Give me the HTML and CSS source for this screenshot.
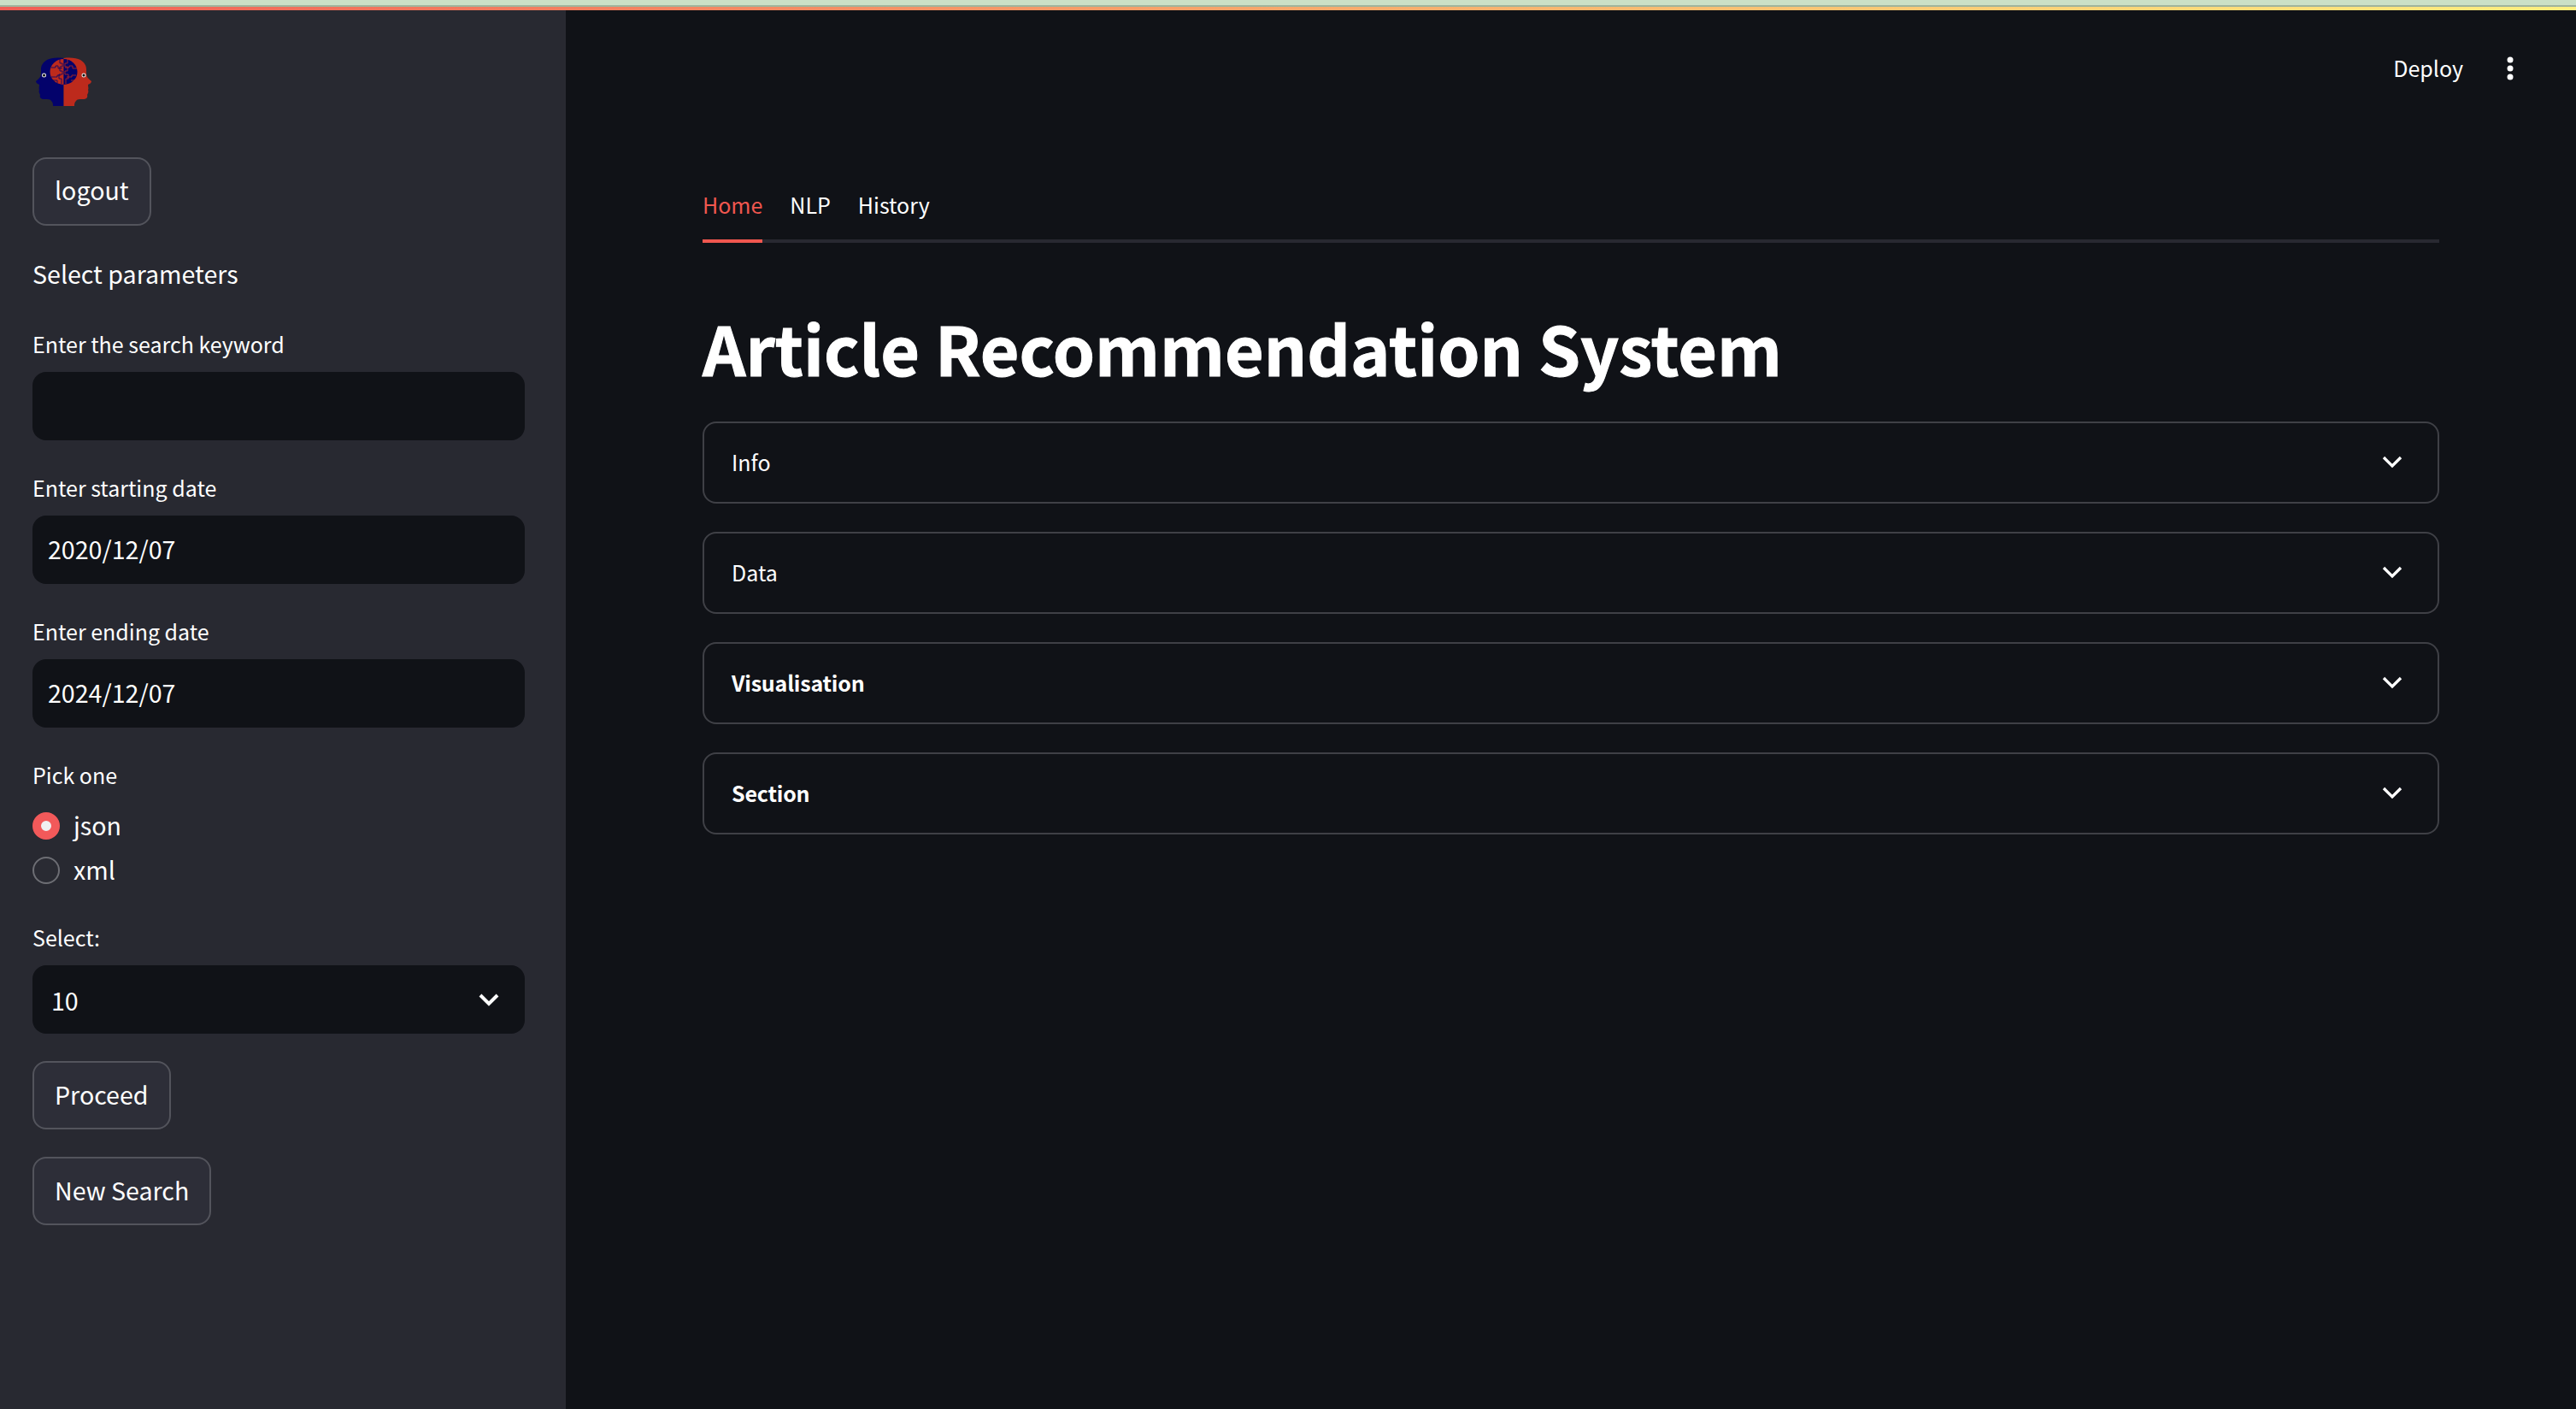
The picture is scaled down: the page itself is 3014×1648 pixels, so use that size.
FILE: index.html
```html
<!DOCTYPE html>
<html lang="en">
<head>
    <meta charset="UTF-8">
    <title>Article Recommendation System</title>
    <link rel="stylesheet" href="styles.css">
</head>
<body>
    <div class="browser-edge"></div>
    <div class="decoration"></div>
    <div class="app">
        <aside class="sidebar">
            <svg class="logo" viewBox="0 0 65 58" width="65" height="58">
                <path fill="#03026b" d="M32.500 1 C24 0 17 1 13 3 C8 6 6 10 6 14 C6 19 6 21 5 23 C4 25 2 26 0 28 C0 30 2 31 4 32 C4 35 3 37 4 38 C3 40 4 42 5 44 C4 47 6 49 10 49 C14 49 17 49 18 51 C20 53 20 55 20 57 L32.500 57 Z"/>
                <path fill="#bd2a1c" transform="translate(65) scale(-1,1)" d="M32.500 1 C24 0 17 1 13 3 C8 6 6 10 6 14 C6 19 6 21 5 23 C4 25 2 26 0 28 C0 30 2 31 4 32 C4 35 3 37 4 38 C3 40 4 42 5 44 C4 47 6 49 10 49 C14 49 17 49 18 51 C20 53 20 55 20 57 L32.500 57 Z"/>
                <path fill="#bd2a1c" d="M32.500 2 A16 15 0 0 0 32.500 32 Z"/>
                <path fill="#03026b" d="M32.500 2 A16 15 0 0 1 32.500 32 Z"/>
                <path fill="none" stroke="#03026b" stroke-width=".8" d="M18 12 h5 v-2 h3 v3 h5 M28 2 v5 h3 v4 h-3 v5 h3 v4 h-4 v5 h3 v6 M18 23 h7 v-2 h4 M20 27 h5 v3"/>
                <path fill="none" stroke="#bd2a1c" stroke-width=".8" d="M34 12 h5 v-2 h4 v3 h5 M37 2 v5 h-3 v4 h3 v5 h-3 v4 h4 v5 h-3 v6 M36 23 h6 v-2 h5 M41 27 h4 v3"/>
                <circle cx="9.500" cy="21" r="2.500" fill="#e8e8e8"/>
                <circle cx="9.500" cy="21" r="1.500" fill="#111"/>
                <circle cx="56" cy="21" r="2.500" fill="#e8e8e8"/>
                <circle cx="56" cy="21" r="1.500" fill="#111"/>
            </svg>
            <button class="btn btn-logout">logout</button>
            <div class="side-title">Select parameters</div>

            <label class="field-label label-first">Enter the search keyword</label>
            <input class="field" type="text" value="">
            <label class="field-label">Enter starting date</label>
            <input class="field" type="text" value="2020/12/07">
            <label class="field-label">Enter ending date</label>
            <input class="field" type="text" value="2024/12/07">

            <div class="field-label">Pick one</div>
            <div class="radios">
                <div class="radio-row"><span class="radio radio-on"></span>json</div>
                <div class="radio-row"><span class="radio"></span>xml</div>
            </div>

            <div class="field-label label-select">Select:</div>
            <div class="field select">
                <span>10</span>
                <svg width="40" height="40" viewBox="0 0 24 24"><path fill="none" stroke="#fff" stroke-width="2.400" d="M6 9 l6 6 6-6"/></svg>
            </div>

            <button class="btn btn-proceed">Proceed</button>
            <button class="btn btn-new">New Search</button>
        </aside>

        <main class="main">
            <header class="header">
                <span class="deploy">Deploy</span>
                <svg class="kebab" width="10" height="30" viewBox="0 0 10 30">
                    <circle cx="5" cy="5" r="3.500" fill="#fff"/>
                    <circle cx="5" cy="15" r="3.500" fill="#fff"/>
                    <circle cx="5" cy="25" r="3.500" fill="#fff"/>
                </svg>
            </header>
            <div class="content">
                <ul class="tabs">
                    <li class="selected">Home</li>
                    <li>NLP</li>
                    <li>History</li>
                </ul>
                <h1 class="title">Article Recommendation System</h1>
                <div class="expander">
                    <span>Info</span>
                    <svg width="40" height="40" viewBox="0 0 24 24"><path fill="none" stroke="#fff" stroke-width="2" d="M6 9 l6 6 6-6"/></svg>
                </div>
                <div class="expander">
                    <span>Data</span>
                    <svg width="40" height="40" viewBox="0 0 24 24"><path fill="none" stroke="#fff" stroke-width="2" d="M6 9 l6 6 6-6"/></svg>
                </div>
                <div class="expander">
                    <b>Visualisation</b>
                    <svg width="40" height="40" viewBox="0 0 24 24"><path fill="none" stroke="#fff" stroke-width="2" d="M6 9 l6 6 6-6"/></svg>
                </div>
                <div class="expander">
                    <b>Section</b>
                    <svg width="40" height="40" viewBox="0 0 24 24"><path fill="none" stroke="#fff" stroke-width="2" d="M6 9 l6 6 6-6"/></svg>
                </div>
            </div>
        </main>
    </div>
</body>
</html>
```

FILE: styles.css
```css
*{
    margin: 0;
    padding: 0;
    box-sizing: border-box;
}
html,body{
    height: 100%;
}
body{
    display: flex;
    flex-direction: column;
    background: #101217;
    color: #fff;
    font-family: "Noto Sans CJK SC", "Open Sans", sans-serif;
    font-size: 25px;
    overflow: hidden;
}
li{
    list-style: none;
}
.browser-edge{
    height: 8px;
    background: #cbe0c6;
    border-bottom: 2px solid #a0b49c;
}
.decoration{
    height: 4px;
    background: linear-gradient(90deg, #f05f55, #fff080);
}
.app{
    flex: 1;
    display: flex;
}

/* sidebar */
.sidebar{
    width: 662px;
    padding: 55px 48px 0 38px;
    background: #282931;
    display: flex;
    flex-direction: column;
    align-items: flex-start;
}
.logo{
    display: block;
    margin: 0 0 59px 4px;
}
.btn{
    height: 80px;
    padding: 0 24px 4px;
    border: 2px solid #53545c;
    border-radius: 16px;
    background: #2d2e38;
    color: #fff;
    font: inherit;
    font-size: 28.600px;
}
.btn-logout{
    padding-bottom: 6px;
}
.side-title{
    margin-top: 36px;
    margin-bottom: 2px;
    font-size: 28.600px;
    line-height: 40px;
}
.field-label{
    margin-top: 37px;
    margin-bottom: 2px;
    line-height: 36px;
}
.label-first{
    margin-top: 42px;
}
.field{
    width: 100%;
    height: 80px;
    margin-top: 13px;
    padding: 0 18px 4px;
    border: 0;
    border-radius: 16px;
    background: #101217;
    color: #fff;
    font: inherit;
    font-size: 28.600px;
}
.radios{
    margin-top: 12px;
}
.radio-row{
    display: flex;
    align-items: center;
    gap: 16px;
    height: 52px;
    font-size: 28.600px;
}
.radio{
    width: 32px;
    height: 32px;
    margin-top: 3px;
    border: 2px solid #6d6e74;
    border-radius: 50%;
    background: #2a2b33;
}
.radio-on{
    border: 10px solid #f2595a;
    background: #f0f0f2;
}
.label-select{
    margin-top: 36px;
}
.select{
    display: flex;
    align-items: center;
    justify-content: space-between;
    padding: 0 22px;
}
.btn-proceed{
    margin-top: 32px;
}
.btn-new{
    margin-top: 32px;
}

/* main */
.main{
    flex: 1;
    display: flex;
    flex-direction: column;
}
.header{
    height: 136px;
    padding-right: 72px;
    display: flex;
    align-items: center;
    justify-content: flex-end;
    gap: 50px;
}
.deploy{
    padding-bottom: 2px;
}
.content{
    padding: 52px 160px 0;
}
.tabs{
    display: flex;
    gap: 32px;
    height: 84px;
    border-bottom: 4px solid #282931;
}
.tabs>li{
    height: 84px;
    line-height: 78px;
}
.tabs>.selected{
    color: #f0574f;
    border-bottom: 4px solid #f0574f;
}
.title{
    margin: 70px 0 34px;
    font-size: 78.800px;
    line-height: 105px;
    font-weight: 700;
    -webkit-text-stroke: 1px #fff;
}
.expander{
    height: 96px;
    margin-bottom: 33px;
    padding: 0 33px 3px 32px;
    border: 2px solid #3f4046;
    border-radius: 16px;
    display: flex;
    align-items: center;
    justify-content: space-between;
}
.expander>b{
    font-weight: 700;
    letter-spacing: -0.2px;
}
```
